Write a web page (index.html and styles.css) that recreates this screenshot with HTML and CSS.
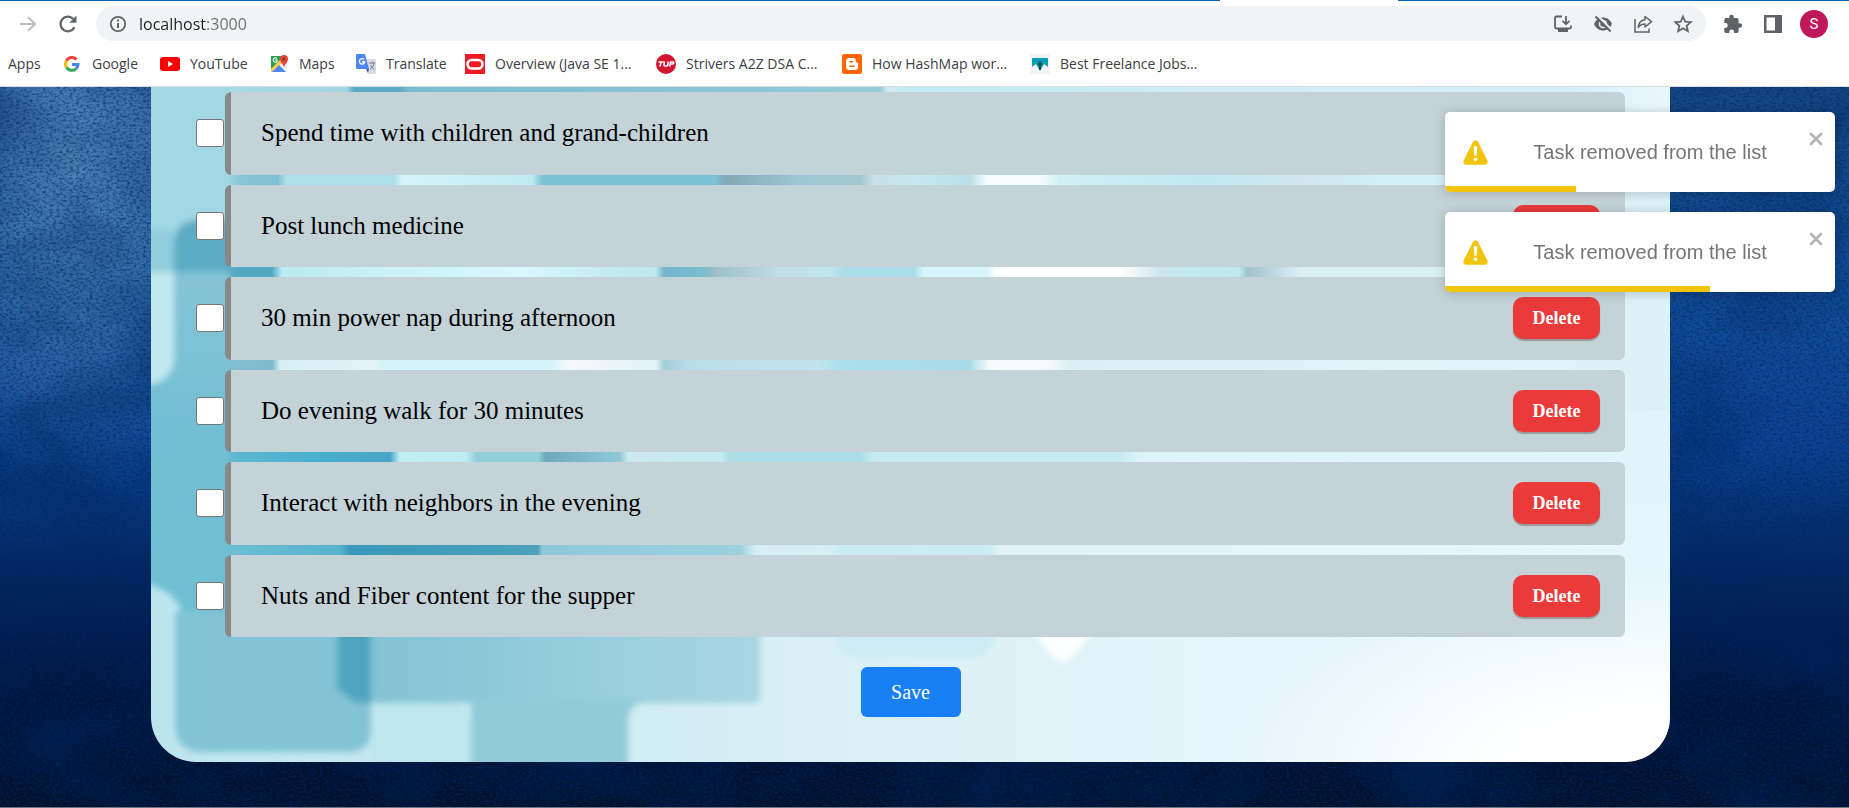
FILE: index.html
```html
<!DOCTYPE html>
<html lang="en">
<head>
<meta charset="utf-8">
<title>Daily tasks</title>
<link rel="stylesheet" href="styles.css">
</head>
<body>
<header class="browser">
  <div class="tab-edge"></div>
  <div class="toolbar">
    <button class="tool" aria-label="Forward"><svg class="icon" viewBox="0 0 20 20"><path d="M2 10h15M10 3l7 7-7 7" fill="none" stroke="#babcbe" stroke-width="2"/></svg></button>
    <button class="tool" aria-label="Reload"><svg class="icon" viewBox="0 0 20 20"><path d="M16.4 13.2A7.3 7.3 0 1 1 15.2 5" fill="none" stroke="#5f6368" stroke-width="2.2"/><path d="M18.5 1.500v7.200h-7.200z" fill="#5f6368"/></svg></button>
    <div class="omnibox">
      <svg class="icon" viewBox="0 0 20 20"><circle cx="10" cy="10" r="7.200" fill="none" stroke="#5f6368" stroke-width="1.800"/><path d="M10 9v5M10 5.500v2" stroke="#5f6368" stroke-width="2"/></svg>
      <input class="address" type="text" value="localhost:3000" aria-label="Address" spellcheck="false">
      <div class="omni-actions">
        <button class="tool" aria-label="Install"><svg class="icon" viewBox="0 0 20 20"><path d="M9 2.500H3.500a1.500 1.500 0 0 0-1.500 1.500v9a1.500 1.500 0 0 0 1.500 1.500h13a1.500 1.500 0 0 0 1.500-1.500V11.500M13 2v8M9.500 6.800l3.500 3.500 3.500-3.500" fill="none" stroke="#5f6368" stroke-width="1.800"/><path d="M5 15h10v3H5z" fill="#5f6368"/></svg></button>
        <button class="tool" aria-label="Third-party cookies blocked"><svg class="icon" viewBox="0 0 20 20"><path d="M1 10C3 5.500 6.500 3.500 10 3.500S17 5.500 19 10c-2 4.500-5.500 6.500-9 6.500S3 14.500 1 10z" fill="#5f6368"/><circle cx="10" cy="10" r="3.500" fill="none" stroke="#f1f3f4" stroke-width="1.600"/><path d="M4.500 1.500L19 16" stroke="#f1f3f4" stroke-width="2"/><path d="M2.500 2.500L17.500 17.500" stroke="#5f6368" stroke-width="2"/></svg></button>
        <button class="tool" aria-label="Share"><svg class="icon" viewBox="0 0 20 20"><path d="M2 5v13h14v-3.500" fill="none" stroke="#5f6368" stroke-width="1.500"/><path d="M12 2.500l6.500 5.200-6.500 5.300V10c-3 0-5 .8-6.700 3.300C5.600 9 7.800 6.200 12 5.700z" fill="none" stroke="#5f6368" stroke-width="1.500" stroke-linejoin="round"/></svg></button>
        <button class="tool" aria-label="Bookmark this tab"><svg class="icon" viewBox="0 0 20 20"><path d="M10 2.500l2.200 5.100 5.600.5-4.200 3.700 1.300 5.500-4.900-3-4.900 3 1.300-5.500-4.200-3.700 5.600-.5z" fill="none" stroke="#5f6368" stroke-width="1.700"/></svg></button>
      </div>
    </div>
    <div class="toolbar-end">
      <button class="tool" aria-label="Extensions"><svg class="icon" viewBox="0 0 20 20"><path d="M16.800 9.200h-1.200V5.800A1.700 1.700 0 0 0 13.900 4.100H10.800V3a2.300 2.300 0 0 0-4.600 0v1.100H3A1.700 1.700 0 0 0 1.300 5.800v3.300h1.100a2.400 2.400 0 0 1 0 4.800H1.300v3.300A1.700 1.700 0 0 0 3 18.900h3.300v-1.100a2.400 2.400 0 0 1 4.800 0v1.100h2.800a1.700 1.700 0 0 0 1.700-1.700v-3.400h1.200a2.300 2.300 0 0 0 0-4.600z" fill="#5f6368"/></svg></button>
      <button class="tool" aria-label="Side panel"><svg class="icon" viewBox="0 0 20 20"><path d="M1 1h18v18H1zM3.500 3.500v13H12v-13z" fill="#5f6368" fill-rule="evenodd"/></svg></button>
      <button class="avatar" aria-label="Profile">S</button>
    </div>
  </div>
  <nav class="bookmarks" aria-label="Bookmarks">
    <a class="bookmark" href="#">Apps</a>
    <a class="bookmark" href="#"><svg class="icon" viewBox="0 0 20 20"><g fill="none" stroke-width="3"><path d="M4.400 6.800A6.300 6.300 0 0 1 14.500 5.500" stroke="#ea4335"/><path d="M4.400 6.800a6.300 6.300 0 0 0 0 6.400" stroke="#fbbc05"/><path d="M4.400 13.200A6.300 6.300 0 0 0 14 14.800" stroke="#34a853"/><path d="M14 14.800a6.300 6.300 0 0 0 2-4.300H10" stroke="#4285f4"/></g></svg>Google</a>
    <a class="bookmark" href="#"><svg class="icon" viewBox="0 0 20 20"><rect y="3" width="20" height="14" rx="3" fill="#f00"/><path d="M8 7l5 3-5 3z" fill="#fff"/></svg>YouTube</a>
    <a class="bookmark" href="#"><svg class="icon" viewBox="0 0 20 20"><path d="M2 2h16v16H2z" fill="#e8eaed"/><path d="M2 2h11v6L2 18z" fill="#2b9d52"/><path d="M2 16L13 5l5 10v3z" fill="#f3f3f3"/><path d="M2 15L12 5l2 3L3 18H2z" fill="#fcd04b"/><path d="M3 18l7-7 7 7z" fill="#4a89f3"/><path d="M8 4.500A2.200 2.200 0 1 0 8 7.500V6H6" fill="none" stroke="#fff" stroke-width="1.100"/><path d="M15 14c0-4-4-5-4-9a4 4 0 0 1 8 0c0 4-4 5-4 9z" fill="#e94335"/><circle cx="15" cy="5" r="1.500" fill="#8c2b22"/></svg>Maps</a>
    <a class="bookmark" href="#"><svg class="icon" viewBox="0 0 20 20"><path d="M8 5h11a1 1 0 0 1 1 1v13a1 1 0 0 1-1 1h-7z" fill="#d9dce0"/><path d="M1 0h8l4 15H1a1 1 0 0 1-1-1V1a1 1 0 0 1 1-1z" fill="#4a87f2"/><path d="M10 15h3l-1 4z" fill="#3159b8"/><path d="M8 5.500A2.700 2.700 0 1 0 8.700 8H6" fill="none" stroke="#fff" stroke-width="1.300"/><path d="M13 9h6M16 7.500V9M18 9c-.5 3-2 5-4 6.500M14.500 11c1 2 2 3 4 4.500" fill="none" stroke="#6c8089"/></svg>Translate</a>
    <a class="bookmark" href="#"><svg class="icon" viewBox="0 0 20 20"><path d="M0 0h20v20H0z" fill="#ed1c24"/><rect x="2.500" y="6" width="15" height="8.500" rx="4.200" fill="none" stroke="#fff" stroke-width="2.600"/></svg>Overview (Java SE 1...</a>
    <a class="bookmark" href="#"><svg class="icon" viewBox="0 0 20 20"><circle cx="10" cy="10" r="10" fill="#d4152f"/><path d="M2.500 8h5M5 8l-1 4.500M8.500 7.500L8 11q0 1 1 1h1.500q1 0 1.300-1l.5-3.500M13.500 12.500l1-4.500h2.800q.7 0 .4 1t-1.200 1H14" fill="none" stroke="#fff" stroke-width="1.500"/></svg>Strivers A2Z DSA C...</a>
    <a class="bookmark" href="#"><svg class="icon" viewBox="0 0 20 20"><rect width="20" height="20" rx="2" fill="#f60"/><path d="M7.500 4h3.200A3.500 3.500 0 0 1 14.200 7.500c0 1 .2 1.300 1 1.300.7 0 .9.300.9 1v2.700A3.500 3.500 0 0 1 12.600 16H7.500A3.500 3.500 0 0 1 4 12.500v-5A3.500 3.500 0 0 1 7.500 4z" fill="#fff"/><path d="M7.800 7.800h2.700M7.800 12.200h4.400" stroke="#f60" stroke-width="1.600" stroke-linecap="round"/></svg>How HashMap wor...</a>
    <a class="bookmark" href="#"><svg class="icon" viewBox="0 0 20 20"><path d="M0 0h20v20H0z" fill="#f5f5f5"/><path d="M2 4h16v9l-4-3-4 7-4-7-4 3z" fill="#0b9fb0"/><path d="M10 7l3 3.500-2 1V16H9v-4.500l-2-1z" fill="#0c5560"/></svg>Best Freelance Jobs...</a>
  </nav>
</header>

<main class="app">
  <svg class="texture" aria-hidden="true">
    <filter id="grain" x="0" y="0" width="100%" height="100%">
      <feTurbulence type="fractalNoise" baseFrequency="0.3 0.45" numOctaves="3" seed="8"/>
      <feColorMatrix values="0 0 0 0 0  0 0 0 0 0.02  0 0 0 0 0.12  2.4 0 0 0 -1"/>
    </filter>
    <filter id="clouds" x="0" y="0" width="100%" height="100%">
      <feTurbulence type="fractalNoise" baseFrequency="0.008 0.012" numOctaves="5" seed="21"/>
      <feColorMatrix values="0 0 0 0 0  0 0 0 0 0.02  0 0 0 0 0.12  2 0 0 0 -0.8"/>
    </filter>
    <rect width="100%" height="100%" filter="url(#clouds)" opacity="0.6"/>
    <rect width="100%" height="100%" filter="url(#grain)" opacity="0.65"/>
  </svg>

  <section class="card">
    <svg class="mosaic" viewBox="151 87 1519 675" preserveAspectRatio="none" aria-hidden="true">
      <defs>
        <linearGradient id="b0" gradientUnits="userSpaceOnUse" x1="0" x2="2000" y1="0" y2="0">
          <stop offset="7%" stop-color="#aadde8"/><stop offset="17.300%" stop-color="#a3d6e2"/><stop offset="17.700%" stop-color="#5eabc6"/><stop offset="20%" stop-color="#5eabc6"/><stop offset="20.500%" stop-color="#79bcd0"/><stop offset="44%" stop-color="#93cad7"/><stop offset="44.400%" stop-color="#d5ecf3"/><stop offset="45.400%" stop-color="#c0eaf2"/><stop offset="52%" stop-color="#c3ebf2"/><stop offset="60%" stop-color="#d0eff3"/><stop offset="78%" stop-color="#d2eff7"/><stop offset="83%" stop-color="#e9f7fc"/>
        </linearGradient>
        <linearGradient id="b1" gradientUnits="userSpaceOnUse" x1="0" x2="2000" y1="0" y2="0">
          <stop offset="7%" stop-color="#a3d8e3"/><stop offset="11.300%" stop-color="#9dd4df"/><stop offset="12%" stop-color="#85c7d7"/><stop offset="13.900%" stop-color="#7dc0d3"/><stop offset="14.300%" stop-color="#aee0ea"/><stop offset="19.700%" stop-color="#aee0ea"/><stop offset="20.100%" stop-color="#d4f4f8"/><stop offset="26.600%" stop-color="#c0ebf3"/><stop offset="27.100%" stop-color="#7fc1d4"/><stop offset="35.700%" stop-color="#7fc1d4"/><stop offset="36.300%" stop-color="#82a9b5"/><stop offset="40%" stop-color="#9dc8d4"/><stop offset="43%" stop-color="#a2c8cf"/><stop offset="43.700%" stop-color="#c8dfe7"/><stop offset="46%" stop-color="#c5e8ef"/><stop offset="48.500%" stop-color="#b9dfe8"/><stop offset="49.300%" stop-color="#f6fcff"/><stop offset="52%" stop-color="#f6fcff"/><stop offset="53%" stop-color="#d0f0f4"/><stop offset="60%" stop-color="#bfe9f2"/><stop offset="65%" stop-color="#d0e6ee"/><stop offset="69%" stop-color="#d2eff5"/><stop offset="83%" stop-color="#dcf2f7"/>
        </linearGradient>
        <linearGradient id="b2" gradientUnits="userSpaceOnUse" x1="0" x2="2000" y1="0" y2="0">
          <stop offset="13.600%" stop-color="#55a8c2"/><stop offset="14.100%" stop-color="#bdebf3"/><stop offset="20%" stop-color="#cdf3f7"/><stop offset="26%" stop-color="#d8f8fb"/><stop offset="32.800%" stop-color="#bce6ed"/><stop offset="33.200%" stop-color="#74b6ce"/><stop offset="35.300%" stop-color="#7dbdd0"/><stop offset="35.700%" stop-color="#9dbfc7"/><stop offset="39%" stop-color="#c0dfe7"/><stop offset="41.500%" stop-color="#c0e3ec"/><stop offset="42.200%" stop-color="#a9dde8"/><stop offset="45.700%" stop-color="#a9dde8"/><stop offset="46.200%" stop-color="#d8f5fb"/><stop offset="49.400%" stop-color="#d8f5fb"/><stop offset="49.800%" stop-color="#fff"/><stop offset="56%" stop-color="#fff"/><stop offset="58%" stop-color="#cfe6ee"/><stop offset="60%" stop-color="#c1edf2"/><stop offset="62%" stop-color="#bbe7ed"/><stop offset="62.400%" stop-color="#a0c2cb"/><stop offset="65%" stop-color="#dbeff4"/><stop offset="83%" stop-color="#dbf2f7"/>
        </linearGradient>
        <linearGradient id="b3" gradientUnits="userSpaceOnUse" x1="0" x2="2000" y1="0" y2="0">
          <stop offset="8%" stop-color="#8bc7d9"/><stop offset="13.600%" stop-color="#7fb9cd"/><stop offset="14%" stop-color="#d4eff5"/><stop offset="18.500%" stop-color="#e4f2f7"/><stop offset="19.300%" stop-color="#d3f5f9"/><stop offset="27.500%" stop-color="#d3f5f9"/><stop offset="28.500%" stop-color="#f6f9fc"/><stop offset="32.800%" stop-color="#e0f2f7"/><stop offset="33.200%" stop-color="#a2cfdb"/><stop offset="34.500%" stop-color="#b9dde6"/><stop offset="41%" stop-color="#c2e4ed"/><stop offset="42%" stop-color="#a9e0eb"/><stop offset="48.500%" stop-color="#a9dbe7"/><stop offset="49.500%" stop-color="#f6fcfd"/><stop offset="52.500%" stop-color="#f4fbfc"/><stop offset="53.500%" stop-color="#daeff4"/><stop offset="70%" stop-color="#e2f3f8"/><stop offset="83%" stop-color="#dcf2f7"/>
        </linearGradient>
        <linearGradient id="b4" gradientUnits="userSpaceOnUse" x1="0" x2="2000" y1="0" y2="0">
          <stop offset="7.500%" stop-color="#7ac2d5"/><stop offset="11%" stop-color="#60bad1"/><stop offset="16%" stop-color="#4aafd0"/><stop offset="19.500%" stop-color="#48a5c8"/><stop offset="20%" stop-color="#c1f0f3"/><stop offset="23.300%" stop-color="#bdebf0"/><stop offset="23.800%" stop-color="#94d0dc"/><stop offset="26.900%" stop-color="#94d0dc"/><stop offset="27.300%" stop-color="#6fa9ba"/><stop offset="31%" stop-color="#90cad8"/><stop offset="31.400%" stop-color="#cce9ee"/><stop offset="36%" stop-color="#c5ebef"/><stop offset="36.500%" stop-color="#aadde7"/><stop offset="43%" stop-color="#aadde7"/><stop offset="43.700%" stop-color="#c8ebf2"/><stop offset="56%" stop-color="#c8ebf2"/><stop offset="57%" stop-color="#def3f7"/><stop offset="83%" stop-color="#e0f4f9"/>
        </linearGradient>
        <linearGradient id="b5" gradientUnits="userSpaceOnUse" x1="0" x2="2000" y1="0" y2="0">
          <stop offset="7.500%" stop-color="#7dc1d5"/><stop offset="13%" stop-color="#65bcd1"/><stop offset="17%" stop-color="#58b3ce"/><stop offset="17.500%" stop-color="#3998ba"/><stop offset="26.900%" stop-color="#4ba2bb"/><stop offset="27.100%" stop-color="#8dc8da"/><stop offset="37%" stop-color="#9dd1de"/><stop offset="37.800%" stop-color="#d5edf3"/><stop offset="41.500%" stop-color="#d4eef2"/><stop offset="42%" stop-color="#c9edf2"/><stop offset="49.500%" stop-color="#ccecf3"/><stop offset="50%" stop-color="#e0f3f7"/><stop offset="75%" stop-color="#e5f6fb"/><stop offset="83%" stop-color="#e5f7fc"/>
        </linearGradient>
        <linearGradient id="base" x1="0" x2="1" y1="0" y2="0">
          <stop offset="0" stop-color="#bde5ee"/><stop offset="0.300" stop-color="#d0ecf3"/><stop offset="0.550" stop-color="#def2f6"/><stop offset="0.720" stop-color="#e5f5fb"/><stop offset="1" stop-color="#e5f7fc"/>
        </linearGradient>
        <linearGradient id="tile" x1="0" x2="1" y1="0" y2="0"><stop offset="0" stop-color="#82c3d5"/><stop offset="1" stop-color="#a8d6e2"/></linearGradient>
        <linearGradient id="side" x1="0" x2="0" y1="0" y2="1"><stop offset="0" stop-color="#86c4d7"/><stop offset="0.600" stop-color="#7ac1d4"/><stop offset="1" stop-color="#6fbfd3"/></linearGradient>
        <radialGradient id="glow"><stop offset="0.300" stop-color="#fff"/><stop offset="1" stop-color="#fff" stop-opacity="0"/></radialGradient>
        <filter id="soft" x="-20%" y="-20%" width="140%" height="140%"><feGaussianBlur stdDeviation="3"/></filter>
      </defs>
      <path d="M151 87h1519v675H151z" fill="url(#base)"/>
      <path d="M151 87h1519v50H151z" fill="url(#b0)"/>
      <path d="M151 130h1519v100H151z" fill="url(#b1)"/>
      <path d="M151 226h1519v95H151z" fill="url(#b2)"/>
      <path d="M151 318h1519v95H151z" fill="url(#b3)"/>
      <path d="M151 410h1519v95H151z" fill="url(#b4)"/>
      <path d="M151 503h1519v60H151z" fill="url(#b5)"/>
      <g filter="url(#soft)">
        <path d="M140 70h90v180h-90z" fill="#a2d8e3"/>
        <path d="M174 280v-38q2-22 24-22h32v60z" fill="#5bacc5"/>
        <path d="M140 230h34v45h-34z" fill="#91cddd"/>
        <path d="M140 272h34v90q-2 18-18 22h-16z" fill="#c0e8f0"/>
        <path d="M174 272h56v170h-90v-56q30-2 34-24z" fill="url(#side)"/>
        <path d="M140 436h90v179h-48q-4-25-42-33z" fill="#6fbfd3"/>
        <path d="M175 612h196v118q0 22-24 22H203q-28 0-28-28z" fill="#82c3d6"/>
        <path d="M371 600h389v98q0 5-6 5H371z" fill="url(#tile)"/>
        <path d="M337 590h34v113h-16l-18-15z" fill="#4fa5c0"/>
        <path d="M371 704h82q16 2 18 20v48h-100z" fill="#bde7ed"/>
        <path d="M471 700h175q-18 4-18 22v50H471z" fill="#91cad8"/>
        <path d="M835 600h160v40q-6 18-24 18h-110q-20 0-26-20z" fill="#cbedf3"/>
        <path d="M1032 630h60l-16 24-13 10-13-10z" fill="#fcfeff"/>
      </g>
      <ellipse cx="1640" cy="770" rx="420" ry="200" fill="url(#glow)"/>
    </svg>

    <ul class="tasks">
      <li class="task"><input class="check" type="checkbox" id="t1"><div class="item"><label for="t1">Spend time with children and grand-children</label><button class="delete">Delete</button></div></li>
      <li class="task"><input class="check" type="checkbox" id="t2"><div class="item"><label for="t2">Post lunch medicine</label><button class="delete">Delete</button></div></li>
      <li class="task"><input class="check" type="checkbox" id="t3"><div class="item"><label for="t3">30 min power nap during afternoon</label><button class="delete">Delete</button></div></li>
      <li class="task"><input class="check" type="checkbox" id="t4"><div class="item"><label for="t4">Do evening walk for 30 minutes</label><button class="delete">Delete</button></div></li>
      <li class="task"><input class="check" type="checkbox" id="t5"><div class="item"><label for="t5">Interact with neighbors in the evening</label><button class="delete">Delete</button></div></li>
      <li class="task"><input class="check" type="checkbox" id="t6"><div class="item"><label for="t6">Nuts and Fiber content for the supper</label><button class="delete">Delete</button></div></li>
    </ul>
    <button class="save">Save</button>
  </section>
</main>

<aside class="toasts" aria-live="polite">
  <div class="toast" role="alert">
    <svg class="warn" viewBox="0 0 24 24"><path d="M23.300 19.500L14.700 2.300C14.100 1 13.200.3 12 .3s-2.100.7-2.700 2L.7 19.500c-1 2 .1 4.200 2.300 4.200h18c2.200 0 3.300-2.200 2.300-4.200z" fill="#f1c40f"/><path d="M10.300 6.200q1.700-1 3.400 0L13.100 15h-2.200z" fill="#fff"/><circle cx="12" cy="18.500" r="1.700" fill="#fff"/></svg>
    <p class="toast-text">Task removed from the list</p>
    <button class="close" aria-label="Close"><svg class="close-icon" viewBox="0 0 14 14"><path d="M2 2l10 10M12 2L2 12" stroke="#b3b3b3" stroke-width="2.600" stroke-linecap="round"/></svg></button>
    <div class="progress" style="width:33.6%"></div>
  </div>
  <div class="toast" role="alert">
    <svg class="warn" viewBox="0 0 24 24"><path d="M23.300 19.500L14.700 2.300C14.100 1 13.200.3 12 .3s-2.100.7-2.700 2L.7 19.500c-1 2 .1 4.200 2.300 4.200h18c2.200 0 3.300-2.200 2.300-4.200z" fill="#f1c40f"/><path d="M10.300 6.200q1.700-1 3.400 0L13.100 15h-2.200z" fill="#fff"/><circle cx="12" cy="18.500" r="1.700" fill="#fff"/></svg>
    <p class="toast-text">Task removed from the list</p>
    <button class="close" aria-label="Close"><svg class="close-icon" viewBox="0 0 14 14"><path d="M2 2l10 10M12 2L2 12" stroke="#b3b3b3" stroke-width="2.600" stroke-linecap="round"/></svg></button>
    <div class="progress" style="width:67.9%"></div>
  </div>
</aside>
</body>
</html>
```
FILE: styles.css
```css
* {
  box-sizing: border-box;
}

body {
  margin: 0;
  min-height: 100vh;
  display: flex;
  flex-direction: column;
  border-bottom: 1px solid #6d7684;
  font-family: "Liberation Serif", "Times New Roman", serif;
}

button {
  padding: 0;
  border: 0;
  background: none;
  font: inherit;
  cursor: pointer;
}

/* Browser frame */

.browser {
  background: #fff;
  border-bottom: 1px solid #d9dbdd;
  font-family: "Open Sans", "Noto Sans", sans-serif;
}

.tab-edge {
  height: 1px;
  background: linear-gradient(90deg, #0a62ae 66%, #fff 66%, #fff 75.6%, #0a62ae 75.6%);
}

.toolbar {
  display: flex;
  align-items: center;
  gap: 20px;
  padding: 5px 21px 0 18px;
}

.tool {
  display: flex;
}

.icon {
  display: block;
  width: 20px;
  height: 20px;
  flex: none;
}

.omnibox {
  flex: 1;
  display: flex;
  align-items: center;
  gap: 11px;
  height: 35px;
  margin-left: -2px;
  padding: 0 13px 0 12px;
  border-radius: 18px;
  background: #f1f3f4;
}

.address {
  flex: 1;
  min-width: 0;
  padding: 0;
  border: 0;
  outline: 0;
  font: 16px/24px "Open Sans", "Noto Sans", sans-serif;
  color: transparent;
  background: linear-gradient(90deg, #202124 68px, #6b6f73 68px);
  background-clip: text;
}

.omni-actions {
  display: flex;
  gap: 20px;
}

.toolbar-end {
  display: flex;
  align-items: center;
  gap: 20px;
  margin-left: -3px;
}

.avatar {
  width: 28px;
  height: 28px;
  margin-left: -3px;
  border-radius: 50%;
  background: #c2185b;
  color: #fff;
  font: 15px/28px Roboto, sans-serif;
}

.bookmarks {
  display: grid;
  grid-template-columns: 54px 98px 109px 87px 109px 191px 186px 188px auto;
  align-items: center;
  height: 45px;
  padding-left: 8px;
}

.bookmark {
  display: flex;
  align-items: center;
  gap: 10px;
  color: #3c4043;
  font-size: 14px;
  line-height: 20px;
  text-decoration: none;
  white-space: nowrap;
}

/* Page */

.app {
  position: relative;
  flex: 1;
  display: flex;
  padding: 0 179px 45px 151px;
  background:
    radial-gradient(ellipse 200px 340px at 70px 70px, #5086b8 0%, transparent 100%),
    linear-gradient(180deg, #174784 0%, #11509a 30%, #0b4290 50%, #042660 68%, #01143a 86%, #00112c 100%);
}

.texture {
  position: absolute;
  inset: 0;
  width: 100%;
  height: 100%;
}

.card {
  position: relative;
  flex: 1;
  display: flex;
  flex-direction: column;
  align-items: center;
  gap: 30px;
  padding: 5px 45px 45px;
  border-radius: 0 0 45px 45px;
  overflow: hidden;
}

.mosaic {
  position: absolute;
  inset: 0;
  width: 100%;
  height: 100%;
}

.tasks {
  position: relative;
  flex: 1;
  align-self: stretch;
  display: grid;
  grid-auto-rows: 1fr;
  gap: 10px;
  margin: 0;
  padding: 0;
  list-style: none;
}

.task {
  display: flex;
  align-items: center;
  gap: 1px;
}

.check {
  appearance: none;
  flex: none;
  width: 28px;
  height: 28px;
  margin: 0;
  border: 1px solid #767676;
  border-radius: 3px;
  background: #fff;
}

.check:checked {
  background: #187ff5;
}

.item {
  flex: 1;
  align-self: stretch;
  display: flex;
  align-items: center;
  justify-content: space-between;
  padding: 0 25px 0 30px;
  border-left: 6px solid #888;
  border-radius: 6px;
  background: #c4d3d8;
  color: #000;
  font-size: 25px;
  line-height: 30px;
}

.delete {
  width: 87px;
  height: 42px;
  border-radius: 10px;
  background: #eb3a3a;
  box-shadow: 0 2px 1px #999;
  color: #fff;
  font-size: 18px;
  font-weight: bold;
}

.save {
  position: relative;
  width: 100px;
  height: 50px;
  border-radius: 6px;
  background: #187ff5;
  color: #fff;
  font-size: 20px;
}

/* Notifications */

.toasts {
  position: fixed;
  top: 112px;
  right: 14px;
  width: 390px;
  display: grid;
  gap: 20px;
}

.toast {
  position: relative;
  display: flex;
  align-items: center;
  height: 80px;
  padding: 0 12px 0 18px;
  border-radius: 5px;
  overflow: hidden;
  background: #fff;
  box-shadow: 0 1px 12px rgba(0, 0, 0, 0.2);
}

.warn {
  width: 25px;
  height: 25px;
}

.toast-text {
  flex: 1;
  margin: 0;
  padding-left: 3px;
  color: #757575;
  font: 20px/30px "Liberation Sans", Arial, sans-serif;
  text-align: center;
}

.close {
  align-self: flex-start;
  margin-top: 20px;
}

.close-icon {
  display: block;
  width: 14px;
  height: 14px;
}

.progress {
  position: absolute;
  left: 0;
  bottom: 0;
  height: 6px;
  background: #f1c40f;
}
```
